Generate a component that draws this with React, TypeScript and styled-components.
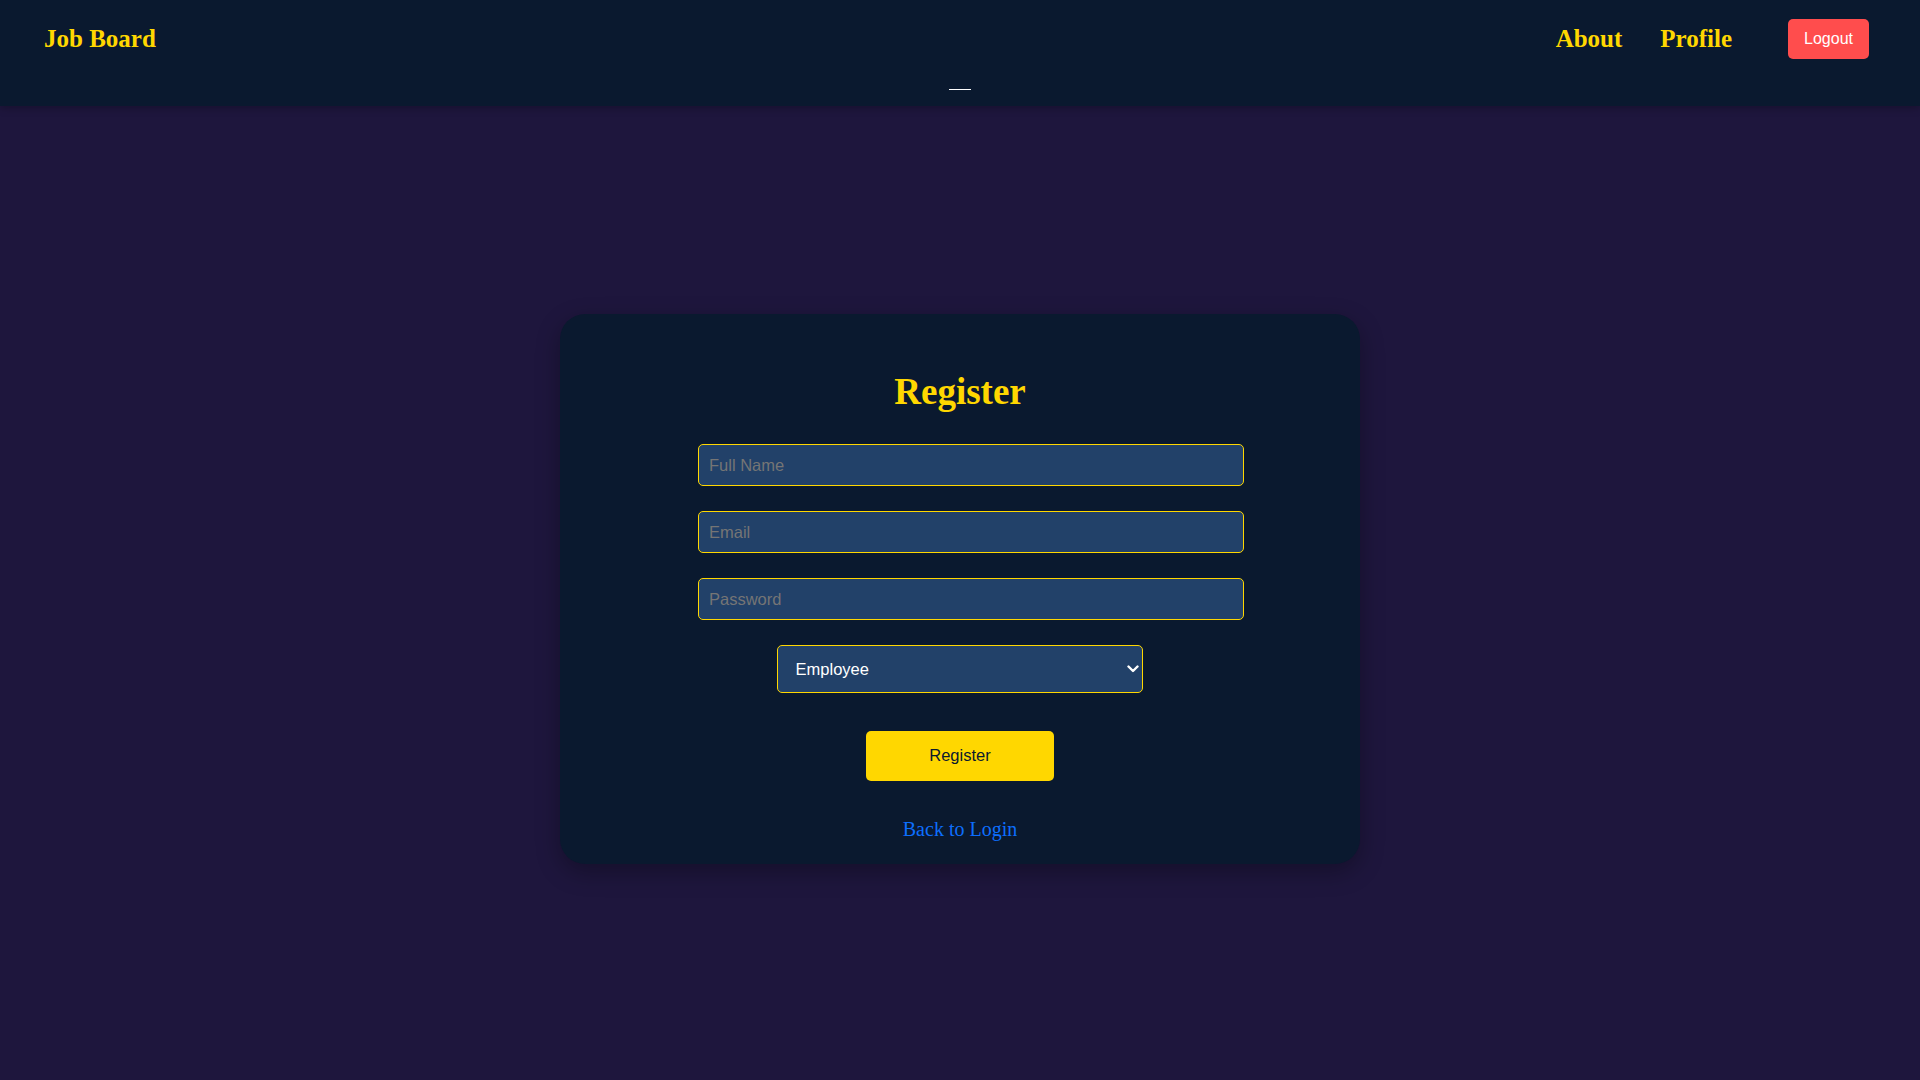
import React from "react";
import styled, { createGlobalStyle } from "styled-components";

const GlobalStyle = createGlobalStyle`
  html, body {
    margin: 0;
    padding: 0;
    background: #1e163d;
    font-family: "Liberation Serif", "Times New Roman", serif;
  }
  * {
    -webkit-font-smoothing: antialiased;
  }
`;

const Nav = styled.header`
  display: flex;
  flex-direction: column;
  background: #0a192f;
  padding: 19px 0 16px;
  box-shadow: 0 2px 8px rgba(0, 0, 0, 0.25);
`;

const NavRow = styled.div`
  display: flex;
  align-items: center;
  justify-content: space-between;
  height: 40px;
  padding: 0 51px 0 44px;
`;

const Brand = styled.a`
  font-family: "Liberation Serif", "Times New Roman", serif;
  font-size: 25px;
  font-weight: bold;
  color: #ffd700;
  text-decoration: none;
`;

const NavRight = styled.div`
  display: flex;
  align-items: center;
  gap: 56px;
`;

const NavLinks = styled.nav`
  display: flex;
  align-items: center;
  gap: 38px;
`;

const NavLink = styled.a`
  font-family: "Liberation Serif", "Times New Roman", serif;
  font-size: 25px;
  font-weight: bold;
  color: #ffd700;
  text-decoration: none;
`;

const LogoutButton = styled.button`
  height: 40px;
  padding: 0 16px;
  background: #ff4d4d;
  color: #ffffff;
  border: none;
  border-radius: 5px;
  font-family: "Liberation Sans", Arial, sans-serif;
  font-size: 16px;
  cursor: pointer;
`;

const MenuBar = styled.div`
  align-self: center;
  width: 22px;
  height: 1px;
  margin-top: 30px;
  background: #ffffff;
`;

const Main = styled.main`
  display: flex;
  align-items: center;
  justify-content: center;
  min-height: calc(100vh - 107px);
  padding-bottom: 8px;
  box-sizing: border-box;
`;

const Card = styled.section`
  width: 800px;
  box-sizing: border-box;
  display: flex;
  flex-direction: column;
  align-items: center;
  padding: 56px 0 23px;
  background: #0a192f;
  border-radius: 25px;
  box-shadow: 0 8px 24px rgba(0, 0, 0, 0.3);
`;

const Title = styled.h2`
  margin: 0 0 31px;
  font-family: "Liberation Serif", "Times New Roman", serif;
  font-size: 37px;
  font-weight: bold;
  color: #ffd700;
`;

const Form = styled.form`
  width: 524px;
  display: flex;
  flex-direction: column;
  align-items: flex-start;
  gap: 25px;
`;

const Input = styled.input`
  box-sizing: content-box;
  width: 100%;
  height: 20px;
  padding: 10px;
  border: 1px solid #ffd700;
  border-radius: 5px;
  background: #224169;
  color: #ffffff;
  font-family: "Liberation Sans", Arial, sans-serif;
  font-size: 16.5px;
  line-height: 20px;
  outline: none;
  &::placeholder {
    color: #757575;
  }
`;

const SelectWrap = styled.div`
  position: relative;
  align-self: center;
  width: 70%;
  height: 48px;
`;

const Select = styled.select`
  appearance: none;
  -webkit-appearance: none;
  box-sizing: border-box;
  width: 100%;
  height: 100%;
  padding: 0 24px 0 18px;
  border: 1px solid #ffd700;
  border-radius: 5px;
  background: #224169;
  color: #ffffff;
  font-family: "Liberation Sans", Arial, sans-serif;
  font-size: 16.5px;
  outline: none;
`;

const Chevron = styled.svg`
  position: absolute;
  right: 4px;
  top: 50%;
  width: 12px;
  height: 8px;
  transform: translateY(-50%);
  pointer-events: none;
`;

const SubmitButton = styled.button`
  align-self: center;
  width: 188px;
  height: 50px;
  margin-top: 13px;
  border: none;
  border-radius: 5px;
  background: #ffd700;
  color: #0a192f;
  font-family: "Liberation Sans", Arial, sans-serif;
  font-size: 16.5px;
  cursor: pointer;
`;

const BackLink = styled.a`
  display: block;
  margin-top: 37px;
  font-family: "Liberation Serif", "Times New Roman", serif;
  font-size: 20px;
  color: #0d6efd;
  text-decoration: none;
`;

export default function App() {
  return (
    <>
      <GlobalStyle />
      <Nav>
        <NavRow>
          <Brand href="#">Job Board</Brand>
          <NavRight>
            <NavLinks>
              <NavLink href="#">About</NavLink>
              <NavLink href="#">Profile</NavLink>
            </NavLinks>
            <LogoutButton type="button">Logout</LogoutButton>
          </NavRight>
        </NavRow>
        <MenuBar />
      </Nav>
      <Main>
        <Card>
          <Title>Register</Title>
          <Form onSubmit={(e) => e.preventDefault()}>
            <Input type="text" placeholder="Full Name" />
            <Input type="email" placeholder="Email" />
            <Input type="password" placeholder="Password" />
            <SelectWrap>
              <Select defaultValue="employee">
                <option value="employee">Employee</option>
                <option value="employer">Employer</option>
              </Select>
              <Chevron viewBox="0 0 12 8" aria-hidden="true">
                <path
                  d="M1.5 1.5 L6 6 L10.5 1.5"
                  fill="none"
                  stroke="#ffffff"
                  strokeWidth="2.4"
                  strokeLinecap="round"
                  strokeLinejoin="round"
                />
              </Chevron>
            </SelectWrap>
            <SubmitButton type="submit">Register</SubmitButton>
          </Form>
          <BackLink href="#">Back to Login</BackLink>
        </Card>
      </Main>
    </>
  );
}
